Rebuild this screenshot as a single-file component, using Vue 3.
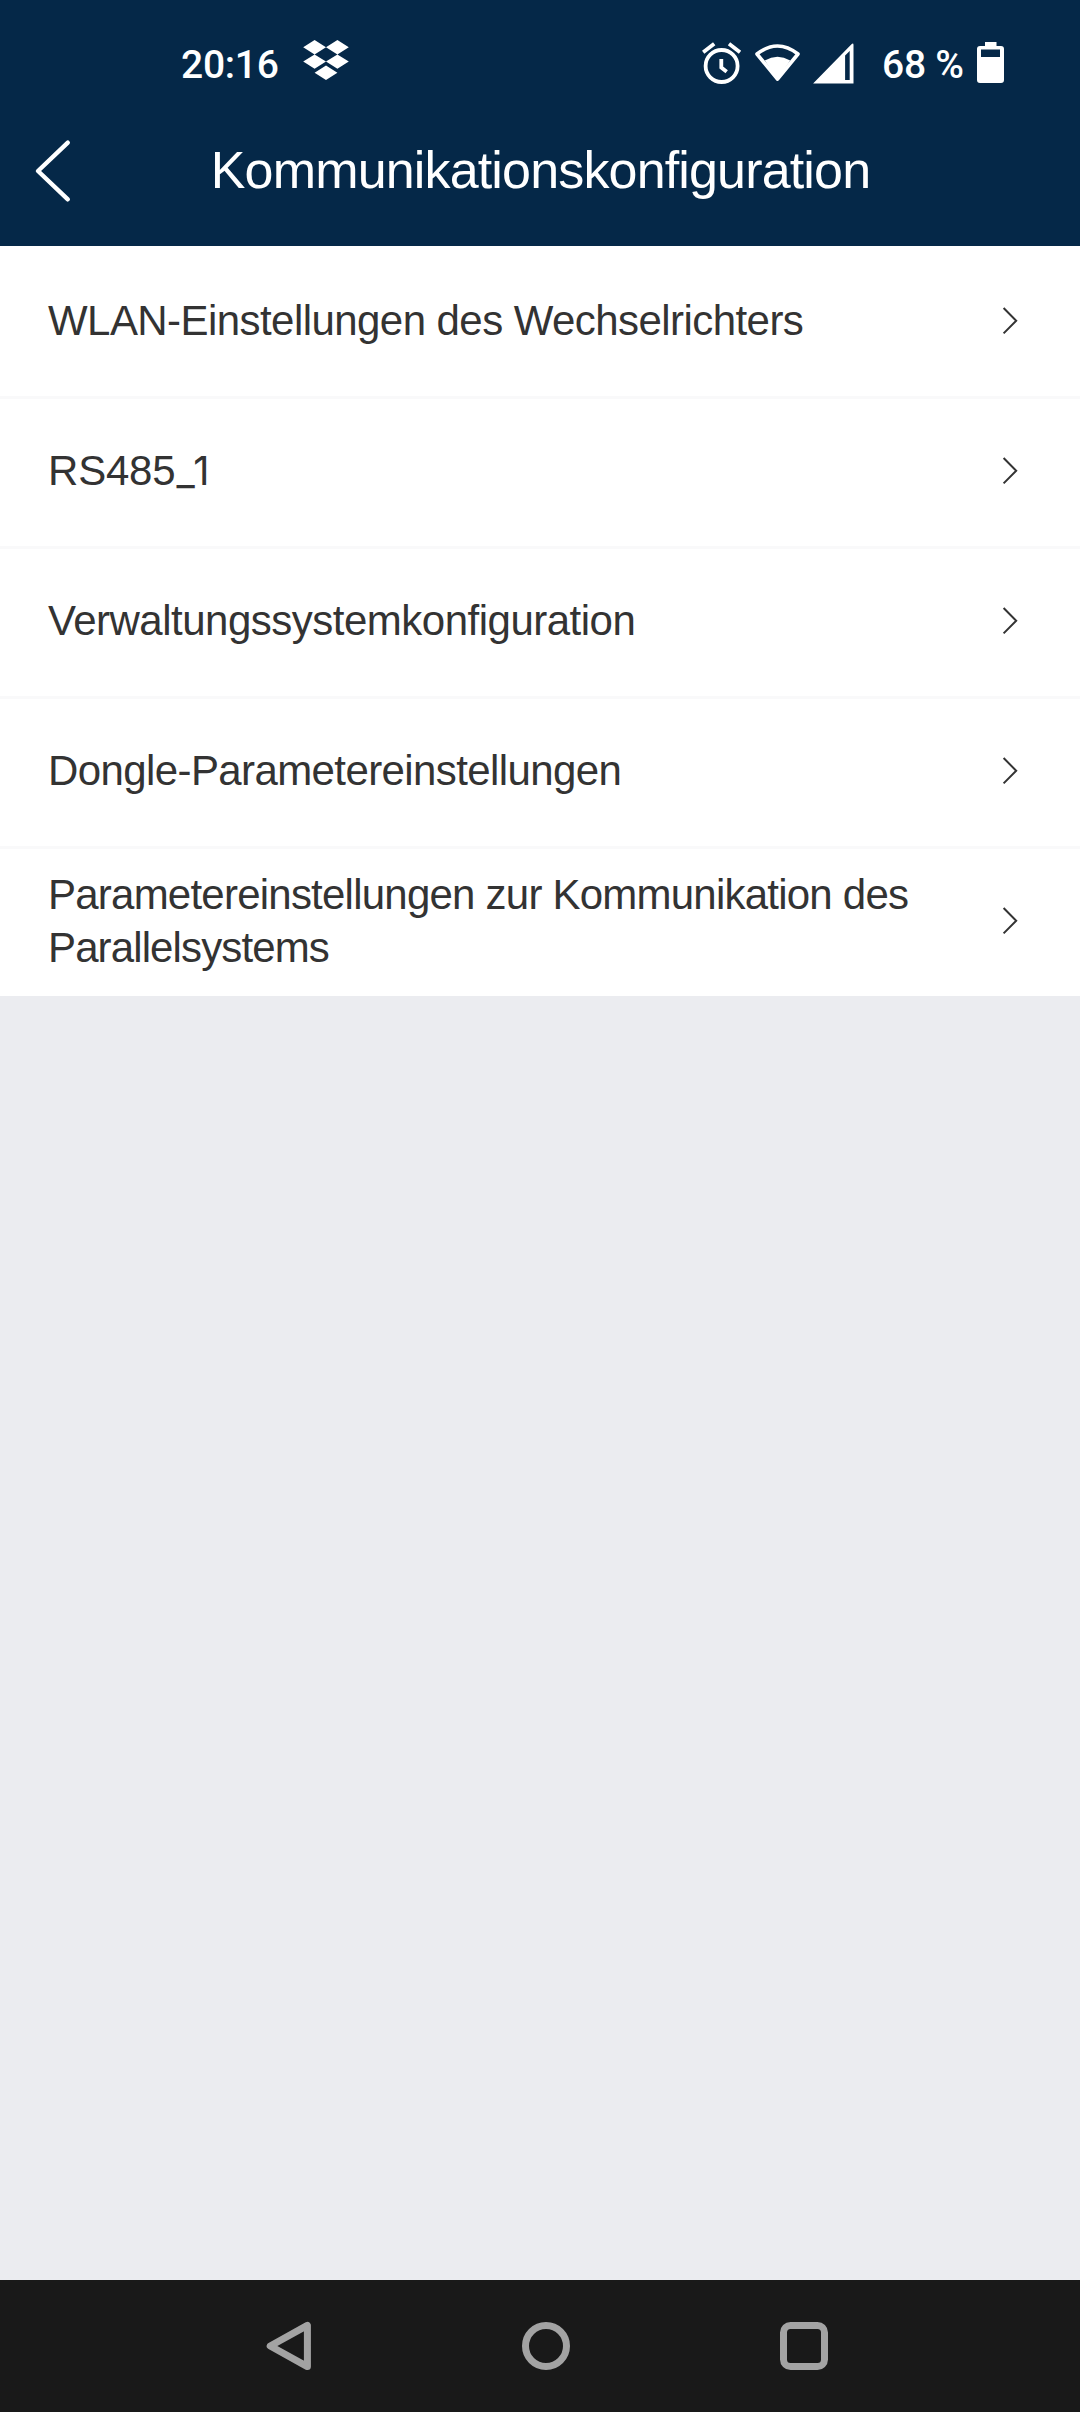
<script setup>
const items = [
  { id: 'wlan', lines: ['WLAN-Einstellungen des Wechselrichters'] },
  { id: 'rs485', lines: ['RS485'], port: '_1' },
  { id: 'verwaltung', lines: ['Verwaltungssystemkonfiguration'] },
  { id: 'dongle', lines: ['Dongle-Parametereinstellungen'] },
  { id: 'parallel', lines: ['Parametereinstellungen zur Kommunikation des', 'Parallelsystems'] },
]
</script>

<template>
  <div class="screen">
    <header class="header">
      <div class="status">
        <span class="time">20:16</span>
        <svg class="dropbox" width="46" height="60" viewBox="303 34 46 60" fill="#fff">
          <path d="M314.6 40 326 47.2 314.6 54.4 303.2 47.2ZM337.4 40 348.8 47.2 337.4 54.4 326 47.2ZM314.6 54.4 326 61.6 314.6 68.8 303.2 61.6ZM337.4 54.4 348.8 61.6 337.4 68.8 326 61.6ZM326 65.6 337.4 72.8 326 80 314.6 72.8Z" />
        </svg>
        <svg class="alarm" width="40" height="60" viewBox="702 34 40 60" fill="none" stroke="#fff" stroke-width="3.8">
          <circle cx="721.6" cy="66" r="16" />
          <path d="M721.3 59v8.6l5.4 4.2M703.2 52.3l11-8.6M740 52.3l-11-8.6" />
        </svg>
        <svg class="wifi" width="46" height="60" viewBox="755 34 46 60">
          <path d="M757 54Q777.5 38 798 54L777.5 79Z" fill="none" stroke="#fff" stroke-width="3.6" stroke-linejoin="round" />
          <path d="M764.8 60.4Q777.5 53 790.2 60.4L777.5 79Z" fill="#fff" />
        </svg>
        <svg class="signal" width="41" height="60" viewBox="813.5 34 41 60" fill="#fff">
          <path fill-rule="evenodd" d="M813.6 83.6 852 44.2Q854 42.6 854 45V83.6ZM845.6 55.4V80H850.2V51Z" />
        </svg>
        <span class="percent">68 %</span>
        <svg class="battery" width="28" height="60" viewBox="976 34 28 60" fill="#fff">
          <path fill-rule="evenodd" d="M985 42h11.5v4h4.5q3 0 3 3v31q0 3-3 3h-21q-3 0-3-3V49q0-3 3-3h5ZM981 49.6V57h19v-7.4Z" />
        </svg>
      </div>
      <div class="titlebar">
        <svg class="back" width="40" height="66" viewBox="33 138 40 66" fill="none" stroke="#fff" stroke-width="4.4" stroke-linecap="round" stroke-linejoin="round">
          <path d="M67.8 142.7 38 171 67.8 199.3" />
        </svg>
        <h1 class="title">Kommunikationskonfiguration</h1>
      </div>
    </header>

    <ul class="list">
      <li v-for="item in items" :key="item.id" class="row" :class="item.id">
        <div class="label">
          <span v-for="line in item.lines" :key="line" class="line">{{ line }}<span v-if="item.port" class="port">{{ item.port }}</span></span>
        </div>
        <svg width="18" height="30" viewBox="0 0 18 30" fill="none" stroke="#333" stroke-width="2">
          <path d="M1.6 2 14.2 14.7 1.6 27.4" />
        </svg>
      </li>
    </ul>

    <nav class="nav">
      <svg width="56" height="56" viewBox="0 0 56 56">
        <path d="M45.4 7.4V48.6L8.2 28Z" />
      </svg>
      <svg width="56" height="56" viewBox="0 0 56 56">
        <circle cx="27" cy="28" r="20.5" />
      </svg>
      <svg width="56" height="56" viewBox="0 0 56 56">
        <rect x="7.5" y="7.5" width="41" height="41" rx="7" />
      </svg>
    </nav>
  </div>
</template>

<style>
body {
  margin: 0;
  background: #ebecf0;
}
</style>

<style scoped>
.screen {
  width: 1080px;
  height: 2412px;
  display: flex;
  flex-direction: column;
  overflow: hidden;
  background: #ebecf0;
  color: #333;
  font-family: "Liberation Sans", Arial, sans-serif;
}
svg {
  display: block;
  flex: none;
}
.header {
  height: 246px;
  background: #052848;
  color: #fff;
}
.status {
  box-sizing: border-box;
  height: 96px;
  padding: 32px 76px 0 181px;
  display: flex;
  align-items: center;
  font: 500 39px/60px Roboto, sans-serif;
  letter-spacing: -0.25px;
  white-space: nowrap;
}
.time,
.percent {
  padding-top: 2px;
}
.time {
  width: 122px;
}
.alarm {
  margin-left: auto;
}
.wifi {
  margin-left: 13px;
}
.signal {
  margin-left: 12.5px;
}
.percent {
  width: 94px;
  margin-left: 28px;
}
.titlebar {
  box-sizing: border-box;
  height: 150px;
  padding: 0 33px;
  display: grid;
  grid-template-columns: 40px 1fr 40px;
  align-items: center;
}
.title {
  margin: 0;
  padding: 0 0 2px 1px;
  font-size: 52px;
  line-height: 60px;
  font-weight: 400;
  letter-spacing: -0.84px;
  text-align: center;
  white-space: nowrap;
}
.list {
  margin: 0;
  padding: 0;
  list-style: none;
  background: #fff;
}
.row {
  box-sizing: border-box;
  height: 150px;
  padding: 0 60px 1px 48px;
  display: flex;
  align-items: center;
  justify-content: space-between;
}
.row + .row {
  box-shadow: inset 0 3px #f9f9fa;
}
.line {
  display: block;
  font-size: 42px;
  line-height: 53px;
  letter-spacing: -0.56px;
  white-space: nowrap;
}
.rs485 .line {
  letter-spacing: -0.2px;
}
.rs485 .port {
  margin-left: 1px;
  font-family: Inter, sans-serif;
  font-size: 40px;
  line-height: 1;
  letter-spacing: 3px;
}
.verwaltung .line {
  letter-spacing: -0.5px;
}
.dongle .line {
  letter-spacing: -0.6px;
}
.parallel .line {
  letter-spacing: -0.77px;
}
.parallel .line + .line {
  letter-spacing: -0.88px;
}
.nav {
  height: 132px;
  margin-top: auto;
  padding: 0 248px 0 262px;
  display: flex;
  align-items: center;
  justify-content: space-between;
  background: #191919;
}
.nav svg {
  fill: none;
  stroke: #a3a3a3;
  stroke-width: 7;
  stroke-linejoin: round;
}
</style>
